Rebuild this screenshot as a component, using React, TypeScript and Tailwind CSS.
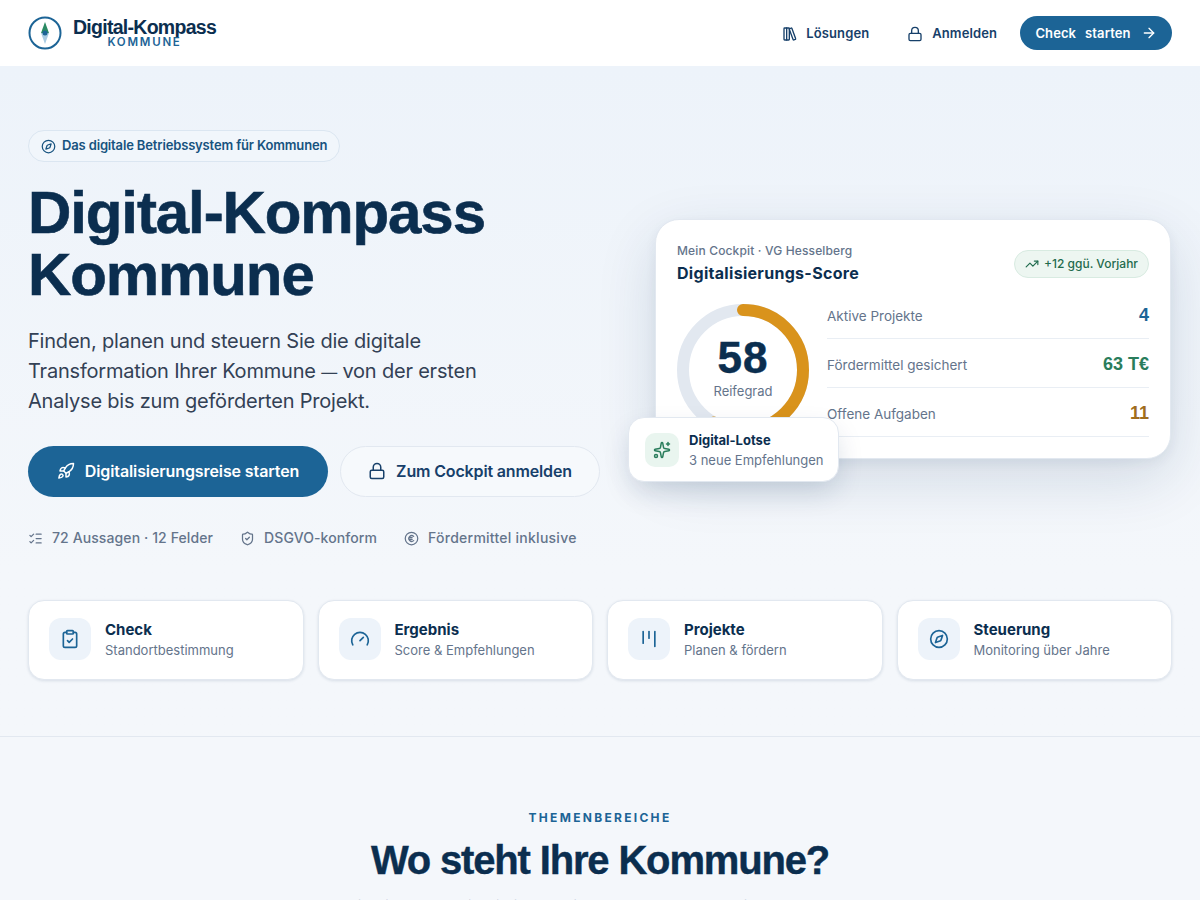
import React from 'react';
import {
    ArrowRight,
    ClipboardCheck,
    Compass,
    Gauge,
    Kanban,
    LibraryBig,
    ListChecks,
    Lock,
    Rocket,
    ShieldCheck,
    Sparkles,
    TrendingUp,
} from 'lucide-react';

const sans = "font-['Inter','Liberation_Sans',sans-serif]";
const head = "font-['Liberation_Sans',Arial,sans-serif]";

const features = [
    { icon: ClipboardCheck, title: 'Check', text: 'Standortbestimmung' },
    { icon: Gauge, title: 'Ergebnis', text: 'Score & Empfehlungen' },
    { icon: Kanban, title: 'Projekte', text: 'Planen & fördern' },
    { icon: Compass, title: 'Steuerung', text: 'Monitoring über Jahre' },
];

const stats = [
    { label: 'Aktive Projekte', value: '4', color: 'text-[#1c6496]' },
    { label: 'Fördermittel gesichert', value: '63 T€', color: 'text-[#2a7d5c]' },
    { label: 'Offene Aufgaben', value: '11', color: 'text-[#a06d1e]' },
];

const Logo = () => (
    <svg width="34" height="34" viewBox="0 0 34 34" fill="none">
        <circle cx="17" cy="17" r="15.5" stroke="#1c6496" strokeWidth="2" />
        <path d="M17 6 L21 17 L13 17 Z" fill="#2a8a63" />
        <path d="M17 28 L21 17 L13 17 Z" fill="#a9cbe2" />
        <circle cx="17" cy="17" r="2.5" fill="#1c6496" />
    </svg>
);

// lucide has no circled euro in this version
const EuroCircle = ({ className }: { className?: string }) => (
    <svg className={className} viewBox="0 0 24 24" fill="none" stroke="currentColor" strokeWidth="2" strokeLinecap="round" strokeLinejoin="round">
        <circle cx="12" cy="12" r="10" />
        <path d="M8 10.5h5M8 13.5h5M15.5 8.6a4.6 4.6 0 1 0 0 6.8" />
    </svg>
);

const ScoreRing = () => (
    <div className="relative w-[132px] h-[132px] shrink-0">
        <svg width="132" height="132" viewBox="0 0 132 132" className="-rotate-90">
            <circle cx="66" cy="66" r="60" fill="none" stroke="#e2e8f0" strokeWidth="12" />
            <circle
                cx="66"
                cy="66"
                r="60"
                fill="none"
                stroke="#d9931c"
                strokeWidth="12"
                strokeLinecap="round"
                strokeDasharray="218.7 377"
            />
        </svg>
        <div className="absolute inset-0 flex flex-col items-center justify-center pb-[5px]">
            <span className={`${head} text-[44px] leading-[44px] font-bold text-[#0b2e4f] tracking-[1px] [-webkit-text-stroke:0.5px_#0b2e4f]`}>58</span>
            <span className="text-[13px] leading-[18px] mt-[2px] text-[#64748b]">Reifegrad</span>
        </div>
    </div>
);

export default function App() {
    return (
        <div className={`${sans} h-screen overflow-hidden bg-[#f4f7fb] text-[#0b2e4f]`}>
            <header className="h-[66px] bg-white flex items-center justify-between px-7">
                <div className="flex items-center gap-[11px]">
                    <Logo />
                    <div className="flex flex-col items-center">
                        <span className={`${head} text-[19.5px] leading-[18px] font-bold tracking-[-0.72px]`}>Digital-Kompass</span>
                        <span className="text-[11.5px] leading-[12px] font-semibold tracking-[1.75px] text-[#1c6496]">KOMMUNE</span>
                    </div>
                </div>
                <nav className="flex items-center">
                    <a className="flex items-center gap-[8px] pt-[2px] text-[13px] tracking-[0.1px] font-semibold text-[#17406a]">
                        <LibraryBig className="w-4 h-4" />
                        Lösungen
                    </a>
                    <a className="flex items-center gap-[9px] pt-[2px] text-[13px] tracking-[0.1px] font-semibold text-[#17406a] ml-[38px]">
                        <Lock className="w-4 h-4" />
                        Anmelden
                    </a>
                    <button className="ml-[23px] h-[34px] w-[152px] rounded-full bg-[#1c6496] text-white text-[13px] tracking-[0.1px] font-semibold flex items-center justify-center gap-[10px]">
                        <span className="flex gap-[9px] pt-[2px]">
                            <span>Check</span>
                            <span>starten</span>
                        </span>
                        <ArrowRight className="w-4 h-4" />
                    </button>
                </nav>
            </header>

            <section className="bg-gradient-to-b from-[#edf3fa] to-[#f4f7fb] to-75% px-7 pt-16 h-[671px] border-b border-[#e2e8f0]">
                <div className="flex items-center">
                    <div className="w-[627px] shrink-0">
                        <div className="inline-flex items-center gap-[6px] h-8 px-3 rounded-full border border-[#dbe6f1] bg-[#f1f6fb] text-[13px] tracking-[-0.15px] font-semibold text-[#17537f]">
                            <Compass className="w-[15px] h-[15px]" />
                            Das digitale Betriebssystem für Kommunen
                        </div>
                        <h1 className={`${head} mt-[20px] text-[60px] leading-[62px] font-bold tracking-[-1.1px] text-[#0b2e4f] [-webkit-text-stroke:0.6px_#0b2e4f]`}>
                            Digital-Kompass
                            <br />
                            Kommune
                        </h1>
                        <p className="mt-[20px] text-[20px] leading-[30px] tracking-[-0.2px] text-[#334155]">
                            Finden, planen und steuern Sie die digitale
                            <br />
                            Transformation Ihrer Kommune <span className="text-[16px] leading-none">—</span> von der ersten
                            <br />
                            Analyse bis zum geförderten Projekt.
                        </p>
                        <div className="flex gap-3 mt-[30px]">
                            <button className="w-[300px] h-[51px] pb-[2px] rounded-full bg-[#1c6496] text-white text-[16px] tracking-[-0.1px] font-semibold flex items-center justify-center gap-[10px]">
                                <Rocket className="w-[18px] h-[18px]" />
                                Digitalisierungsreise starten
                            </button>
                            <button className="w-[260px] h-[51px] pb-[2px] rounded-full border border-[#e2e8f0] bg-[#f6f9fc] text-[#17406a] text-[16px] tracking-[-0.15px] font-semibold flex items-center justify-center gap-[10px]">
                                <Lock className="w-[18px] h-[18px]" />
                                Zum Cockpit anmelden
                            </button>
                        </div>
                        <div className="flex items-center gap-[27px] mt-[31px] text-[14px] leading-[20px] tracking-[0.1px] font-medium text-[#64748b]">
                            <span className="flex items-center gap-[9px]">
                                <ListChecks className="w-[15px] h-[15px]" />
                                72 Aussagen · 12 Felder
                            </span>
                            <span className="flex items-center gap-[9px]">
                                <ShieldCheck className="w-[15px] h-[15px]" />
                                DSGVO-konform
                            </span>
                            <span className="flex items-center gap-[9px] tracking-[0.25px]">
                                <EuroCircle className="w-[15px] h-[15px]" />
                                Fördermittel inklusive
                            </span>
                        </div>
                    </div>

                    <div className="relative w-[516px] h-[240px] rounded-[24px] bg-white border border-[#e2e8f0] shadow-[0_20px_60px_rgba(15,50,90,0.14),0_4px_12px_rgba(15,50,90,0.06)] px-[21px] pt-[22px]">
                        <div className="flex items-start justify-between">
                            <div>
                                <div className="mt-[1px] text-[12px] leading-[16px] tracking-[0.15px] font-medium text-[#64748b]">Mein Cockpit · VG Hesselberg</div>
                                <div className="text-[16px] leading-[22px] mt-[3px] tracking-[0.3px] font-bold text-[#0b2e4f]">Digitalisierungs-Score</div>
                            </div>
                            <div className="mt-[8px] h-[28px] px-[10px] rounded-full bg-[#edf6f1] border border-[#d8ebe1] flex items-center gap-[5px] text-[12px] font-medium text-[#1f6b4d]">
                                <TrendingUp className="w-[14px] h-[14px]" />
                                +12 ggü. Vorjahr
                            </div>
                        </div>
                        <div className="flex gap-[18px] mt-[20px]">
                            <ScoreRing />
                            <div className="flex-1 -mt-[14px]">
                                {stats.map(s => (
                                    <div key={s.label} className="h-[49px] pt-[5px] flex items-center justify-between border-b border-[#e9eef4]">
                                        <span className="text-[13.5px] text-[#64748b]">{s.label}</span>
                                        <span className={`${head} text-[18px] -mt-[2px] font-bold ${s.color}`}>{s.value}</span>
                                    </div>
                                ))}
                            </div>
                        </div>
                        <div className="absolute left-[-28px] top-[197px] w-[211px] h-[65px] rounded-[16px] bg-white border border-[#e2e8f0] shadow-[0_12px_28px_-4px_rgba(15,50,90,0.18)] flex items-center gap-[10px] px-[16px]">
                            <div className="w-[34px] h-[34px] shrink-0 rounded-[10px] bg-[#e9f5ef] flex items-center justify-center">
                                <Sparkles className="w-[18px] h-[18px] text-[#2a7d5c]" />
                            </div>
                            <div className="whitespace-nowrap">
                                <div className="text-[13px] leading-[18px] font-bold text-[#0b2e4f]">Digital-Lotse</div>
                                <div className="text-[13px] leading-[18px] mt-[2px] text-[#64748b]">3 neue Empfehlungen</div>
                            </div>
                        </div>
                    </div>
                </div>

                <div className="grid grid-cols-4 gap-[14px] mt-[52px]">
                    {features.map(f => (
                        <div key={f.title} className="h-[80px] pb-[2px] rounded-[16px] bg-white border border-[#e2e8f0] shadow-[0_1px_3px_rgba(15,50,90,0.12)] flex items-center gap-[14px] px-[20px]">
                            <div className="w-[42px] h-[42px] rounded-[12px] bg-[#edf3fa] flex items-center justify-center">
                                <f.icon className="w-[20px] h-[20px] text-[#1c6496]" />
                            </div>
                            <div>
                                <div className="text-[15px] leading-[20px] font-bold text-[#0b2e4f]">{f.title}</div>
                                <div className="text-[13px] leading-[18px] mt-[1px] text-[#64748b]">{f.text}</div>
                            </div>
                        </div>
                    ))}
                </div>
            </section>

            <section className="pt-[73px] text-center">
                <div className="text-[12px] leading-[16px] font-bold tracking-[2.3px] text-[#1c6496]">THEMENBEREICHE</div>
                <h2 className={`${head} mt-[12px] text-[40px] leading-[44px] font-bold tracking-[-1.16px] text-[#0b2e4f] [-webkit-text-stroke:0.4px_#0b2e4f]`}>Wo steht Ihre Kommune?</h2>
                <p className="mt-[12px] text-[16px] leading-[24px] text-[#64748b]">
                    Wählen Sie die Felder, die Sie interessieren. Der Kompass zeigt Ihnen Ihre Themen.
                </p>
            </section>
        </div>
    );
}
